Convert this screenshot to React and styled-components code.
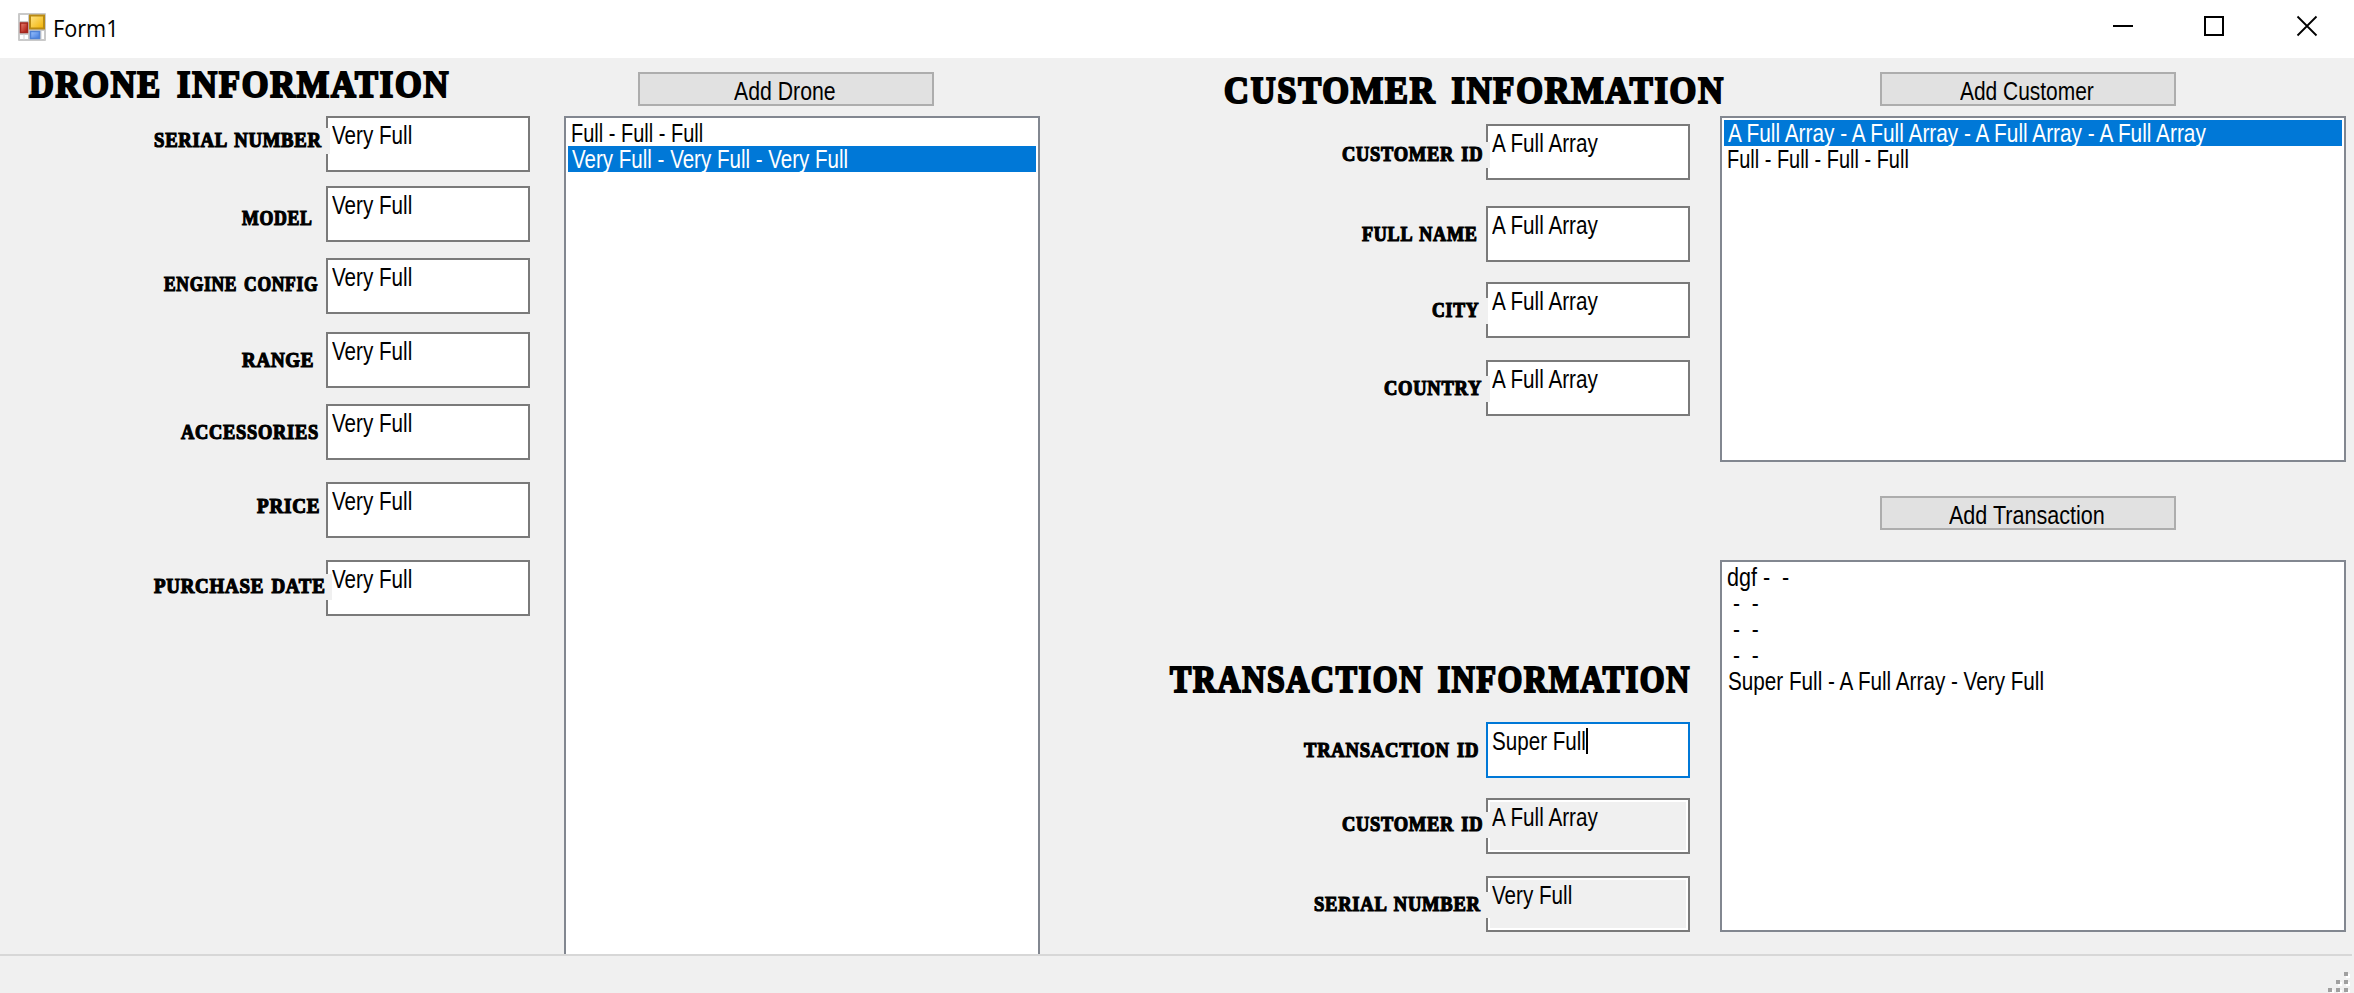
import React, { useLayoutEffect, useRef, useState } from "react";
import styled, { createGlobalStyle, css } from "styled-components";

const GlobalStyle = createGlobalStyle`
  *, *::before, *::after { box-sizing: border-box; }
  html, body { margin: 0; padding: 0; overflow: hidden; }
  body { background: #f0f0f0; }
`;

const Window = styled.div`
  display: flex;
  flex-direction: column;
  width: 2354px;
  height: 993px;
  overflow: hidden;
  background: #f0f0f0;
  color: #000;
  font-family: "Liberation Sans", Arial, sans-serif;
  font-size: 25px;
`;

const TitleBar = styled.header`
  display: flex;
  align-items: flex-start;
  flex: none;
  height: 58px;
  padding: 12px 36px 0 17px;
  background: #fff;
`;

const Title = styled.span`
  flex: 1;
  margin-left: 6px;
  font-family: "Open Sans", "Noto Sans", sans-serif;
  font-size: 23px;
  line-height: 32px;
  height: 32px;
`;

const Controls = styled.div`
  display: flex;
  gap: 70px;
  padding-top: 3px;
`;

const ControlIcon = styled.svg`
  display: block;
  width: 22px;
  height: 22px;
  overflow: visible;
`;

const Client = styled.main`
  display: flex;
  align-items: flex-start;
  flex: none;
  height: 896px;
  overflow: hidden;
`;

const Column = styled.section`
  display: flex;
  flex-direction: column;
  flex: none;
  width: ${(p) => p.$width}px;
  margin-left: ${(p) => p.$left || 0}px;
`;

const Heading = styled.h1`
  margin: ${(p) => p.$top}px 0 ${(p) => p.$bottom}px ${(p) => p.$left}px;
  height: 44px;
  font-family: "Liberation Serif", "Times New Roman", serif;
  font-weight: 700;
  font-size: 37.5px;
  line-height: 44px;
  letter-spacing: 2px;
  word-spacing: 5px;
  -webkit-text-stroke: 2.2px #000;
`;

const FieldRow = styled.div`
  display: grid;
  grid-template-columns: ${(p) => p.$labelWidth}px 204px;
  height: 56px;
  margin-bottom: ${(p) => p.$gap}px;
`;

const Label = styled.label`
  position: relative;
  z-index: 1;
  justify-self: end;
  height: 26px;
  margin-top: ${(p) => p.$top}px;
  margin-right: ${(p) => -p.$overlap}px;
  padding-right: ${(p) => p.$pad}px;
  background: #f0f0f0;
  font-family: "Liberation Serif", "Times New Roman", serif;
  font-weight: 700;
  font-size: 20px;
  line-height: 25px;
  letter-spacing: 0.8px;
  word-spacing: 2px;
  -webkit-text-stroke: 1.2px #000;
`;

const TextBox = styled.div`
  display: flex;
  align-items: flex-start;
  height: 56px;
  padding: 4px;
  border: 2px solid #7a7a7a;
  background: #fff;
  line-height: 26px;
  ${(p) => p.$focused && css`border-color: #0078d7;`}
  ${(p) => p.$readOnly && css`
    background: #f0f0f0;
    box-shadow: inset 0 0 0 2px #fff;
  `}
`;

const Caret = styled.span`
  width: 2px;
  height: 26px;
  background: #000;
`;

const Button = styled.button`
  display: flex;
  justify-content: center;
  width: 296px;
  height: 34px;
  margin: ${(p) => p.$top}px 0 ${(p) => p.$bottom}px ${(p) => p.$left}px;
  padding: 4px 2px 0 0;
  border: 2px solid #adadad;
  border-radius: 0;
  background: #e1e1e1;
  color: #000;
  font-family: inherit;
  font-size: 25px;
  line-height: 26px;
`;

const ListBox = styled.ul`
  flex: none;
  height: ${(p) => p.$height}px;
  margin: 0;
  padding: 2px;
  border: 2px solid #828790;
  background: #fff;
  list-style: none;
`;

const ListItem = styled.li`
  height: 26px;
  padding-left: ${(p) => p.$indent}px;
  line-height: 26px;
  ${(p) => p.$selected && css`
    background: #0078d7;
    color: #fff;
  `}
`;

const StatusBar = styled.footer`
  display: flex;
  justify-content: flex-end;
  flex: 1;
  margin-right: 2px;
  padding-top: 16px;
  border-top: 2px solid #d7d7d7;
`;

const Grip = styled.svg`
  display: block;
  width: 24px;
  height: 21px;
`;

const FitBox = styled.span`
  display: inline-block;
  flex: none;
  width: ${(p) => p.$width}px;
  vertical-align: top;
  white-space: pre;
`;

const FitInner = styled.span`
  display: inline-block;
  transform-origin: 0 50%;
  vertical-align: top;
`;

/* Condenses a run of text so that it fills exactly the given width. */
function Fit({ width, children }) {
  const ref = useRef(null);
  const [scale, setScale] = useState(1);
  useLayoutEffect(() => {
    setScale(width / ref.current.offsetWidth);
  }, [width, children]);
  return (
    <FitBox $width={width}>
      <FitInner ref={ref} style={{ transform: `scaleX(${scale})` }}>{children}</FitInner>
    </FitBox>
  );
}

function AppIcon() {
  return (
    <svg width="30" height="30" viewBox="0 0 30 30">
      <defs>
        <linearGradient id="gold" x1="0" y1="0" x2="1" y2="1">
          <stop offset="0" stopColor="#ffe58a" />
          <stop offset="1" stopColor="#f2b200" />
        </linearGradient>
        <linearGradient id="blue" x1="0" y1="0" x2="1" y2="1">
          <stop offset="0" stopColor="#9cc4ff" />
          <stop offset="1" stopColor="#3f78dc" />
        </linearGradient>
        <linearGradient id="red" x1="0" y1="0" x2="1" y2="1">
          <stop offset="0" stopColor="#e98273" />
          <stop offset="1" stopColor="#a81208" />
        </linearGradient>
      </defs>
      <rect x="1" y="1" width="28" height="28" rx="1" fill="#c9c9c9" />
      <rect x="3" y="3" width="8" height="6" fill="#fff" />
      <rect x="3" y="23" width="8" height="4" fill="#fff" />
      <rect x="24.5" y="19" width="2.5" height="8" fill="#fff" />
      <rect x="6.5" y="22" width="1" height="6" fill="#d5d5d5" />
      <rect x="13" y="3.5" width="14" height="13" fill="url(#gold)" stroke="#b98a12" strokeWidth="2" />
      <rect x="3.5" y="11" width="7" height="9.5" fill="url(#red)" stroke="#a3261c" strokeWidth="1.5" />
      <rect x="13.5" y="19.5" width="9" height="7" fill="url(#blue)" stroke="#4f82d6" strokeWidth="1.5" />
    </svg>
  );
}

const droneFields = [
  { label: "SERIAL NUMBER", width: 168, top: 12, overlap: 4, pad: 8, gap: 14 },
  { label: "MODEL", width: 71, top: 20, overlap: 0, pad: 13, gap: 16 },
  { label: "ENGINE CONFIG", width: 154, top: 14, overlap: 0, pad: 8, gap: 18 },
  { label: "RANGE", width: 72, top: 16, overlap: 0, pad: 12, gap: 16 },
  { label: "ACCESSORIES", width: 138, top: 16, overlap: 0, pad: 7, gap: 22 },
  { label: "PRICE", width: 63, top: 12, overlap: 0, pad: 6, gap: 22 },
  { label: "PURCHASE DATE", width: 172, top: 14, overlap: 6, pad: 6, gap: 0 },
].map((f) => ({ ...f, value: "Very Full", valueWidth: 80 }));

const customerFields = [
  { label: "CUSTOMER ID", width: 141, top: 18, overlap: 4, pad: 7, gap: 26 },
  { label: "FULL NAME", width: 116, top: 16, overlap: 0, pad: 8, gap: 20 },
  { label: "CITY", width: 47, top: 16, overlap: 2, pad: 9, gap: 22 },
  { label: "COUNTRY", width: 98, top: 16, overlap: 4, pad: 8, gap: 0 },
].map((f) => ({ ...f, value: "A Full Array", valueWidth: 106 }));

const transactionFields = [
  { label: "TRANSACTION ID", width: 175, top: 16, overlap: 0, pad: 7, gap: 20, value: "Super Full", valueWidth: 94, focused: true },
  { label: "CUSTOMER ID", width: 141, top: 14, overlap: 4, pad: 7, gap: 22, value: "A Full Array", valueWidth: 106, readOnly: true },
  { label: "SERIAL NUMBER", width: 167, top: 16, overlap: 4, pad: 9, gap: 0, value: "Very Full", valueWidth: 80, readOnly: true },
];

const droneItems = [
  { text: "Full - Full - Full", width: 132, indent: 3 },
  { text: "Very Full - Very Full - Very Full", width: 276, indent: 4, selected: true },
];

const customerItems = [
  { text: "A Full Array - A Full Array - A Full Array - A Full Array", width: 478, indent: 4, selected: true },
  { text: "Full - Full - Full - Full", width: 182, indent: 3 },
];

const transactionItems = [
  { text: "dgf -  -", width: 62, indent: 3 },
  { text: "-  -", width: 26, indent: 9 },
  { text: "-  -", width: 26, indent: 9 },
  { text: "-  -", width: 26, indent: 9 },
  { text: "Super Full - A Full Array - Very Full", width: 316, indent: 4 },
];

function Fields({ fields, labelWidth }) {
  return fields.map((f) => (
    <FieldRow key={f.label} $labelWidth={labelWidth} $gap={f.gap}>
      <Label $top={f.top} $overlap={f.overlap} $pad={f.pad}>
        <Fit width={f.width}>{f.label}</Fit>
      </Label>
      <TextBox $focused={f.focused} $readOnly={f.readOnly}>
        <Fit width={f.valueWidth}>{f.value}</Fit>
        {f.focused && <Caret />}
      </TextBox>
    </FieldRow>
  ));
}

function List({ items, height }) {
  return (
    <ListBox $height={height}>
      {items.map((item, i) => (
        <ListItem key={i} $selected={item.selected} $indent={item.indent}>
          <Fit width={item.width}>{item.text}</Fit>
        </ListItem>
      ))}
    </ListBox>
  );
}

export default function App() {
  return (
    <Window>
      <GlobalStyle />
      <TitleBar>
        <AppIcon />
        <Title><Fit width={66}>Form1</Fit></Title>
        <Controls>
          <ControlIcon viewBox="0 0 22 22"><path d="M1 11H21" stroke="#000" strokeWidth="2" /></ControlIcon>
          <ControlIcon viewBox="0 0 22 22"><path d="M1 2H19V20H1Z" fill="none" stroke="#000" strokeWidth="2" /></ControlIcon>
          <ControlIcon viewBox="0 0 22 22"><path d="M1.5 1.5L20.5 20.5M20.5 1.5L1.5 20.5" stroke="#000" strokeWidth="1.8" /></ControlIcon>
        </Controls>
      </TitleBar>
      <Client>
        <Column $width={530}>
          <Heading $top={5} $bottom={9} $left={29}><Fit width={421}>DRONE INFORMATION</Fit></Heading>
          <Fields fields={droneFields} labelWidth={326} />
        </Column>
        <Column $width={476} $left={34}>
          <Button $top={14} $bottom={10} $left={74}><Fit width={102}>Add Drone</Fit></Button>
          <List items={droneItems} height={860} />
        </Column>
        <Column $width={520} $left={130}>
          <Heading $top={11} $bottom={11} $left={54}><Fit width={501}>CUSTOMER INFORMATION</Fit></Heading>
          <Fields fields={customerFields} labelWidth={316} />
          <Heading $top={242} $bottom={20} $left={0}><Fit width={521}>TRANSACTION INFORMATION</Fit></Heading>
          <Fields fields={transactionFields} labelWidth={316} />
        </Column>
        <Column $width={626} $left={30}>
          <Button $top={14} $bottom={10} $left={160}><Fit width={134}>Add Customer</Fit></Button>
          <List items={customerItems} height={346} />
          <Button $top={34} $bottom={30} $left={160}><Fit width={156}>Add Transaction</Fit></Button>
          <List items={transactionItems} height={372} />
        </Column>
      </Client>
      <StatusBar>
        <Grip viewBox="0 0 24 21">
          {[[16, 0], [8, 8], [16, 8], [0, 16], [8, 16], [16, 16]].map(([x, y]) => (
            <g key={`${x}-${y}`}>
              <rect x={x + 2} y={y + 2} width="4" height="4" fill="#fff" />
              <rect x={x} y={y} width="4" height="4" fill="#a0a0a0" />
            </g>
          ))}
        </Grip>
      </StatusBar>
    </Window>
  );
}
